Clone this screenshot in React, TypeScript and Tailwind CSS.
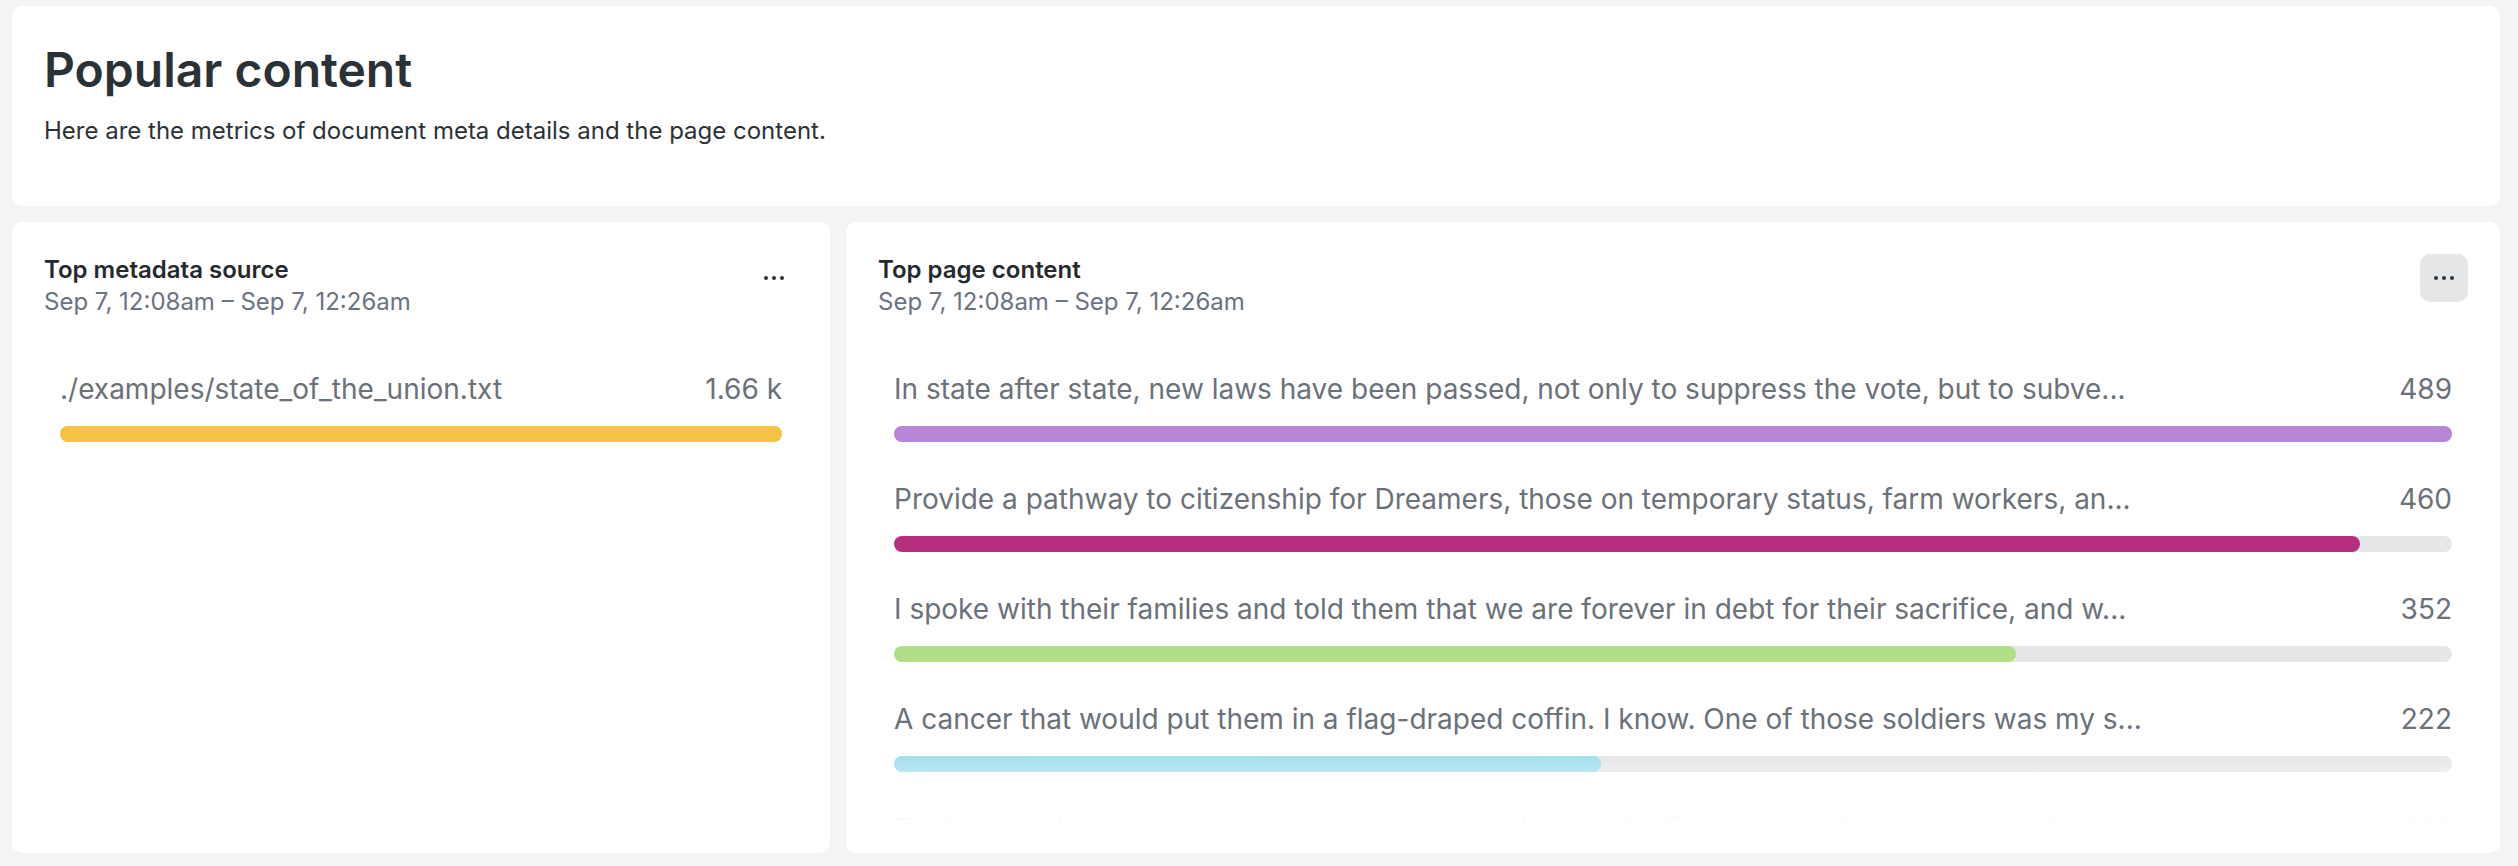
import React from "react";

type Row = {
  label: string;
  value: string;
  pct: number;
  color: string;
};

const metaRows: Row[] = [
  { label: "./examples/state_of_the_union.txt", value: "1.66 k", pct: 100, color: "#f6c244" },
];

const pageRows: Row[] = [
  {
    label: "In state after state, new laws have been passed, not only to suppress the vote, but to subve...",
    value: "489",
    pct: 100,
    color: "#b886d4",
  },
  {
    label: "Provide a pathway to citizenship for Dreamers, those on temporary status, farm workers, an...",
    value: "460",
    pct: (460 / 489) * 100,
    color: "#b52f7f",
  },
  {
    label: "I spoke with their families and told them that we are forever in debt for their sacrifice, and w...",
    value: "352",
    pct: (352 / 489) * 100,
    color: "#b1df85",
  },
  {
    label: "A cancer that would put them in a flag-draped coffin. I know. One of those soldiers was my s...",
    value: "222",
    pct: (222 / 489) * 100,
    color: "#a3ddf0",
  },
  {
    label: "Tonight, I'd like to honor someone who has dedicated his life to serve this country: Justic...",
    value: "198",
    pct: (198 / 489) * 100,
    color: "#f29b6b",
  },
];

function Dots() {
  return (
    <svg width="20" height="4" viewBox="0 0 20 4" fill="#2d3339">
      <circle cx="2" cy="2" r="2" />
      <circle cx="10" cy="2" r="2" />
      <circle cx="18" cy="2" r="2" />
    </svg>
  );
}

function BarList({ rows }: { rows: Row[] }) {
  return (
    <div className="relative mt-[52px] flex-1 overflow-hidden px-[16px]">
      <div className="flex flex-col gap-[38px]">
        {rows.map((r) => (
          <div key={r.label}>
            <div className="flex items-center justify-between gap-4 text-[28px] leading-[38px] text-[#6b7178]">
              <div className="truncate">{r.label}</div>
              <div className="shrink-0">{r.value}</div>
            </div>
            <div className="mt-[18px] h-[16px] w-full rounded-full bg-[#e6e7e9]">
              <div className="h-full rounded-full" style={{ width: `${r.pct}%`, backgroundColor: r.color }} />
            </div>
          </div>
        ))}
      </div>
      <div className="pointer-events-none absolute inset-x-0 bottom-0 h-[66px] bg-linear-to-b from-white/0 to-white" />
    </div>
  );
}

function Card({ title, rows, active, className }: { title: string; rows: Row[]; active?: boolean; className?: string }) {
  return (
    <div className={`flex flex-col rounded-[10px] bg-white p-[32px] ${className ?? ""}`}>
      <div className="flex items-start justify-between">
        <div>
          <div className="text-[24px] font-semibold leading-[32px] text-[#25292e]">{title}</div>
          <div className="text-[24px] leading-[32px] text-[#6b7280]">Sep 7, 12:08am – Sep 7, 12:26am</div>
        </div>
        <button
          className={`flex h-[48px] w-[48px] items-center justify-center rounded-[10px] ${active ? "bg-[#e6e7e9]" : ""}`}
        >
          <Dots />
        </button>
      </div>
      <BarList rows={rows} />
    </div>
  );
}

export default function App() {
  return (
    <div className="min-h-screen bg-[#f3f4f4] pb-[13px] pl-[12px] pr-[18px] pt-[6px] font-['Inter',sans-serif]">
      <div className="h-[200px] rounded-[10px] bg-white px-[32px] pt-[35px]">
        <div className="text-[48px] font-semibold leading-[57px] text-[#2b3237]">Popular content</div>
        <div className="mt-[15px] text-[24px] leading-[36px] text-[#2b3237]">
          Here are the metrics of document meta details and the page content.
        </div>
      </div>
      <div className="mt-[16px] flex h-[631px] gap-[16px]">
        <Card title="Top metadata source" rows={metaRows} className="w-[818px] shrink-0" />
        <Card title="Top page content" rows={pageRows} active className="min-w-0 flex-1" />
      </div>
    </div>
  );
}
